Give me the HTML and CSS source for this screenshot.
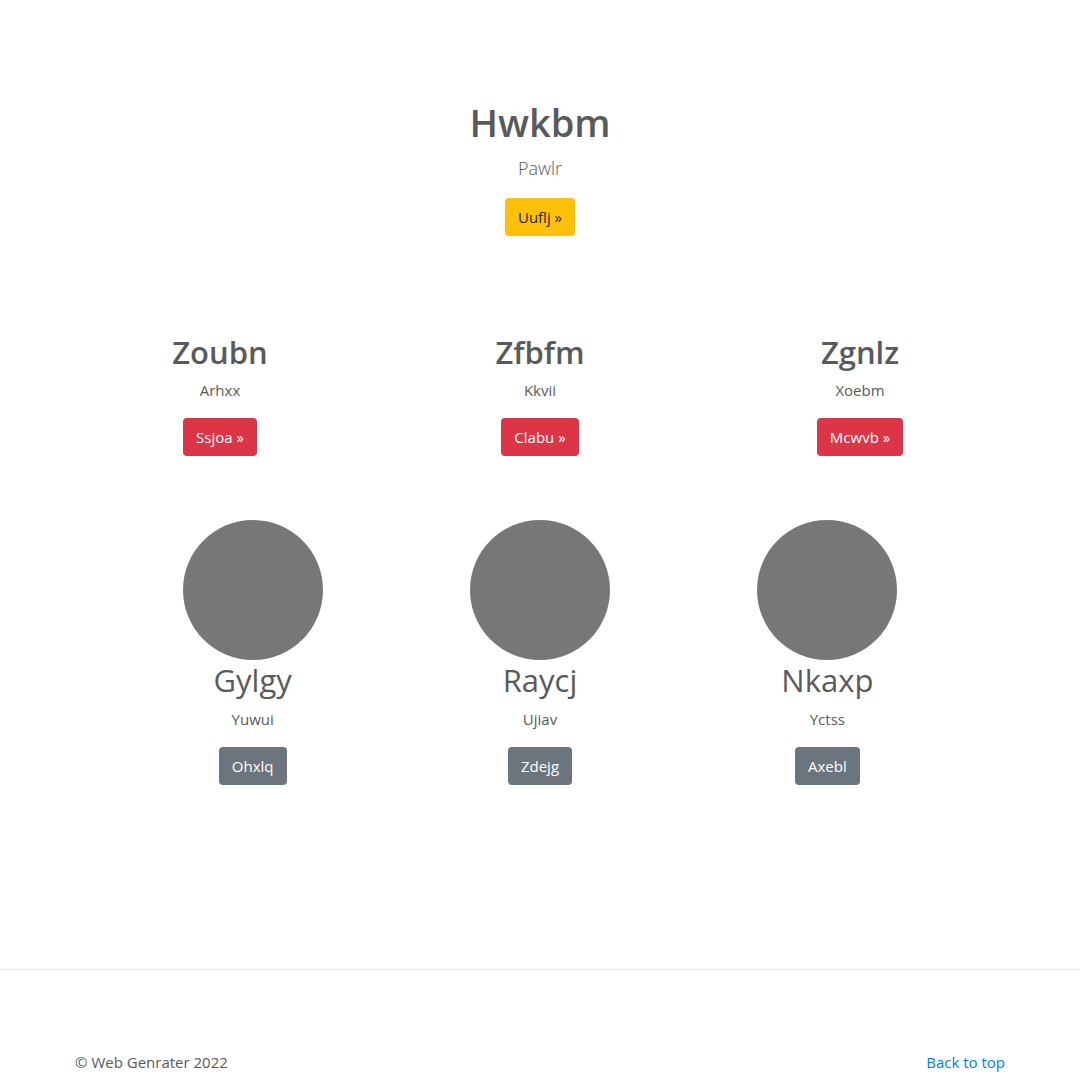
FILE: index.html
```html
<!DOCTYPE html>
<html lang="en">
<head>
<meta charset="utf-8">
<meta name="viewport" content="width=device-width, initial-scale=1">
<title>Hwkbm</title>
<link rel="stylesheet" href="styles.css">
</head>
<body id="top">
<main>
  <section class="hero">
    <h1>Hwkbm</h1>
    <p class="lead">Pawlr</p>
    <button type="button" class="btn btn-warning">Uuflj »</button>
  </section>
  <section class="row features">
    <article class="col"><h2>Zoubn</h2><p>Arhxx</p><button type="button" class="btn btn-danger">Ssjoa »</button></article>
    <article class="col"><h2>Zfbfm</h2><p>Kkvii</p><button type="button" class="btn btn-danger">Clabu »</button></article>
    <article class="col"><h2>Zgnlz</h2><p>Xoebm</p><button type="button" class="btn btn-danger">Mcwvb »</button></article>
  </section>
  <section class="row profiles">
    <article class="col"><div class="avatar"></div><h2>Gylgy</h2><p>Yuwui</p><button type="button" class="btn btn-secondary">Ohxlq</button></article>
    <article class="col"><div class="avatar"></div><h2>Raycj</h2><p>Ujiav</p><button type="button" class="btn btn-secondary">Zdejg</button></article>
    <article class="col"><div class="avatar"></div><h2>Nkaxp</h2><p>Yctss</p><button type="button" class="btn btn-secondary">Axebl</button></article>
  </section>
</main>
<footer class="footer">
  <p>© Web Genrater 2022</p>
  <a href="#top">Back to top</a>
</footer>
</body>
</html>
```
FILE: styles.css
```css
* { box-sizing: border-box; }
body {
  margin: 0;
  background: #fff;
  color: #5a5a5a;
  font-family: "Segoe UI", "Open Sans", "Noto Sans", sans-serif;
  font-size: 15px;
  line-height: 24px;
}
h1, h2, p { margin: 0; }
.hero {
  padding: 98px 16px 96px;
  text-align: center;
}
h1 {
  margin-bottom: 8px;
  font-size: 38px;
  font-weight: 600;
  line-height: 48px;
}
.lead {
  margin-bottom: 16px;
  font-size: 18px;
  font-weight: 300;
  line-height: 28px;
}
.btn {
  height: 38px;
  padding: 0 13px;
  border: 0;
  border-radius: 4px;
  color: #fff;
  font: inherit;
  cursor: pointer;
}
.btn-warning { background: #ffc107; color: #212529; }
.btn-danger { background: #dc3545; }
.btn-secondary { background: #6c757d; }
.row {
  display: grid;
  grid-template-columns: repeat(3, 1fr);
  text-align: center;
}
.features { padding: 0 60px; }
.profiles { padding: 64px 109px 0; }
h2 {
  margin-bottom: 6px;
  font-size: 31px;
  font-weight: 600;
  line-height: 40px;
}
.profiles h2 {
  margin-bottom: 7px;
  font-weight: 400;
}
.col p { margin-bottom: 16px; }
.avatar {
  width: 140px;
  height: 140px;
  margin: 0 auto;
  border-radius: 50%;
  background: #777;
}
.footer {
  display: flex;
  justify-content: space-between;
  margin-top: 184px;
  padding: 80px 75px 0;
  border-top: 1px solid #e5e5e5;
}
.footer a { color: #007bff; text-decoration: none; }
```
